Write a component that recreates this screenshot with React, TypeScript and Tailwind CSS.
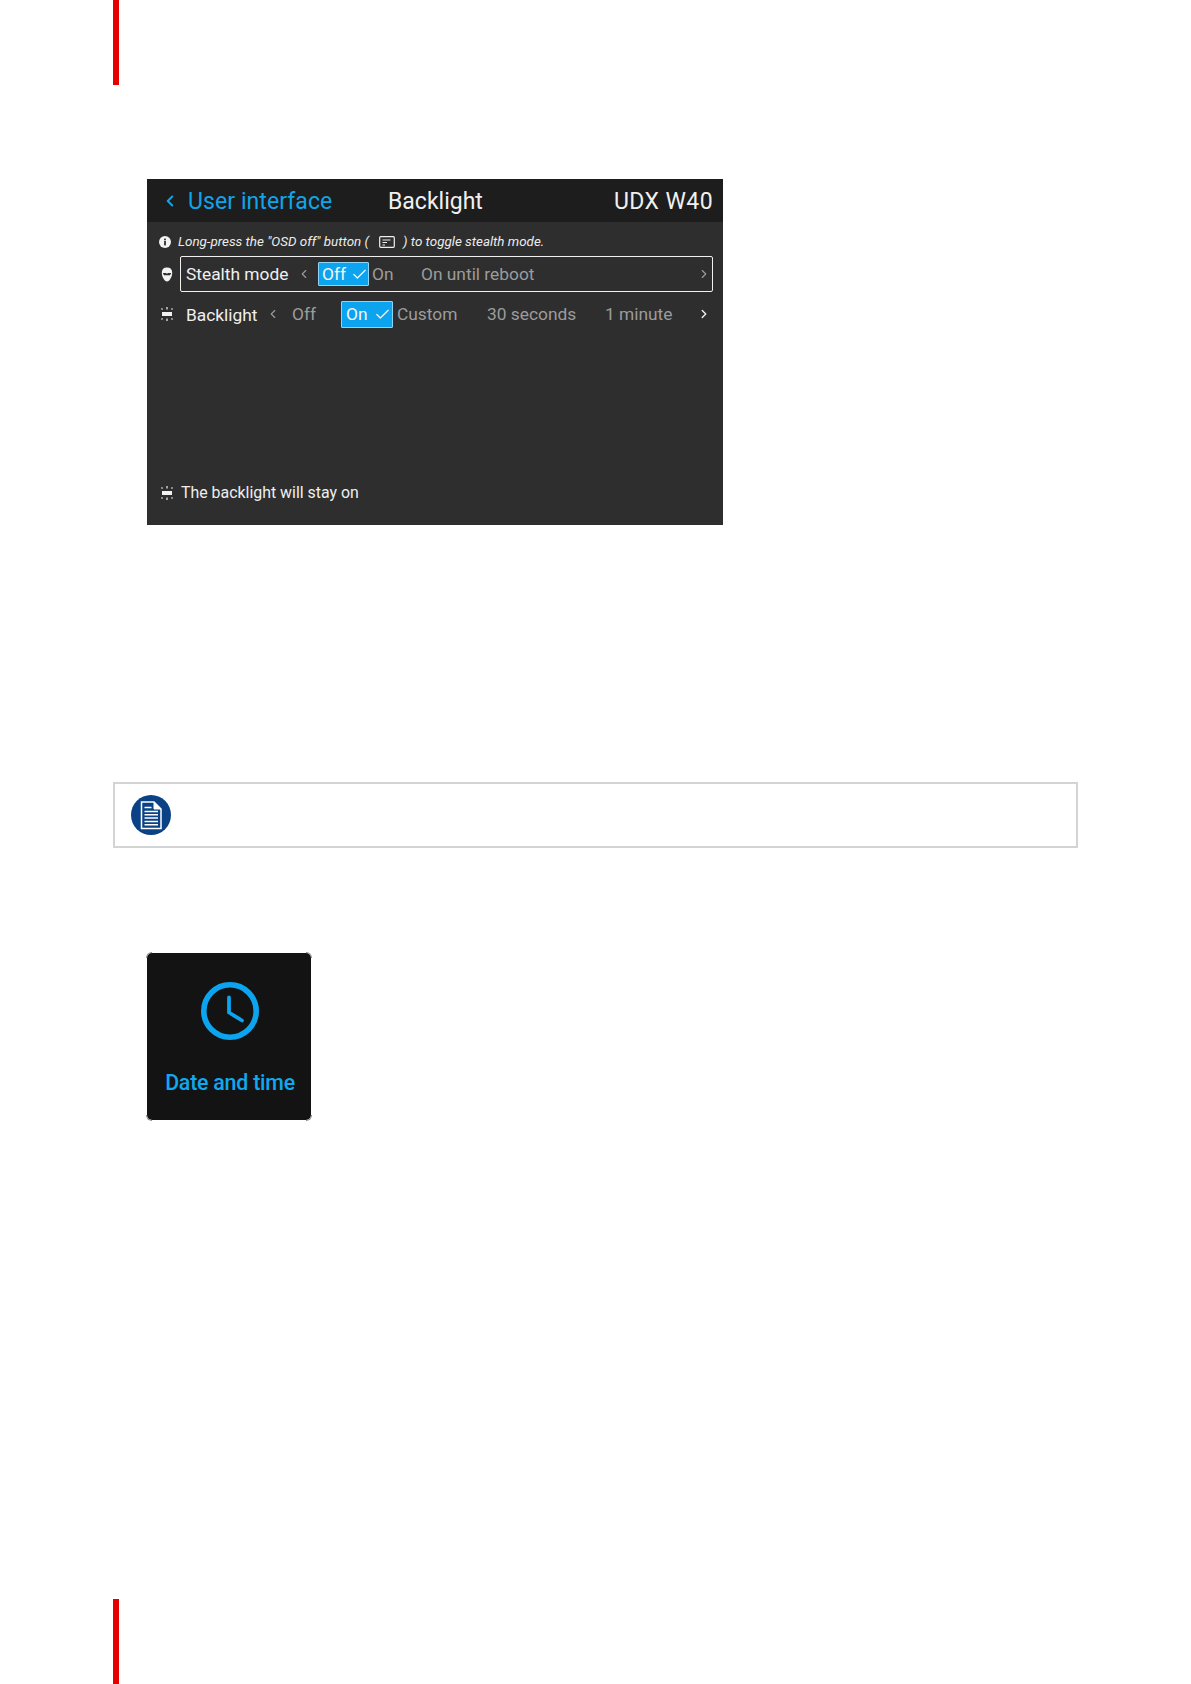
import { ChevronLeft, ChevronRight, Check } from "lucide-react";

function BacklightIcon() {
  return (
    <svg viewBox="0 0 14 16" className="w-[14px] h-[16px]" fill="none" stroke="#f2f2f2">
      <rect x="2" y="6" width="10" height="4" fill="#f2f2f2" stroke="none" />
      <path d="M7 1v2.5M7 12.5V15M1.5 2.5l1 1M12.5 2.5l-1 1M1.5 13.5l1-1M12.5 13.5l-1-1" strokeWidth="1.2" />
    </svg>
  );
}

function StealthIcon() {
  return (
    <svg viewBox="0 0 12 15" className="w-[12px] h-[15px]">
      <path d="M6 0.5C2.6 0.5 0.8 2.4 0.8 5.8c0 3.8 2.6 8.7 5.2 8.7s5.2-4.9 5.2-8.7C11.2 2.4 9.4 0.5 6 0.5z" fill="#f2f2f2" />
      <path d="M1.8 6h3.4l0.8 1 0.8-1h3.4l-1.2 2.2H3z" fill="#2d2d2d" />
    </svg>
  );
}

function Selected({ label, tall }: { label: string; tall?: boolean }) {
  return (
    <div
      className={
        tall
          ? "w-[52px] h-[27px] shrink-0 flex items-center justify-between pl-[4px] pr-[1px] bg-[#0ca4ee] border border-[#8fd3f5] text-[#f4f4f4] rounded-[1px]"
          : "w-[51px] h-[24px] shrink-0 flex items-center justify-between pl-[3px] pr-[0px] bg-[#0ca4ee] border border-[#8fd3f5] text-[#f4f4f4] rounded-[1px]"
      }
    >
      <span>{label}</span>
      <Check className="w-[17px] h-[17px]" strokeWidth={1.8} />
    </div>
  );
}

function CornerMarks() {
  return (
    <>
      <span className="absolute -top-px -left-px w-[6px] h-[6px] border-t border-l border-[#8a8a8a] rounded-tl-[6px]" />
      <span className="absolute -top-px -right-px w-[6px] h-[6px] border-t border-r border-[#8a8a8a] rounded-tr-[6px]" />
      <span className="absolute -bottom-px -left-px w-[6px] h-[6px] border-b border-l border-[#8a8a8a] rounded-bl-[6px]" />
      <span className="absolute -bottom-px -right-px w-[6px] h-[6px] border-b border-r border-[#8a8a8a] rounded-br-[6px]" />
    </>
  );
}

export default function App() {
  return (
    <div className="relative w-[1191px] h-[1684px] bg-white flex flex-col pl-[113px] font-['Roboto',sans-serif] overflow-hidden">
      <div className="w-[6px] h-[85px] shrink-0 bg-[#e60000]" />

      <div className="ml-[34px] mt-[94px] w-[576px] h-[346px] shrink-0 bg-[#2e2e2e] flex flex-col">
        <div className="h-[43px] shrink-0 bg-[#1d1d1d] flex items-center text-[23px] text-[#f0f0f0]">
          <ChevronLeft className="ml-[14px] w-[18px] h-[18px] text-[#0fa5e9]" strokeWidth={2.6} />
          <span className="ml-[9px] w-[200px] pt-[4px] tracking-[0.08px] text-[#0fa5e9]">User interface</span>
          <span className="flex-1 pt-[4px]">Backlight</span>
          <span className="mr-[10px] pt-[4px] tracking-[0.4px]">UDX W40</span>
        </div>

        <div className="mt-[13px] h-[14px] flex items-center pl-[12px] text-[13.4px] italic text-[#ececec]">
          <svg viewBox="0 0 12 12" className="w-[12px] h-[12px] mb-[1px]">
            <circle cx="6" cy="6" r="6" fill="#f2f2f2" />
            <rect x="5.1" y="5" width="1.8" height="4.4" fill="#2e2e2e" />
            <rect x="5.1" y="2.6" width="1.8" height="1.7" fill="#2e2e2e" />
          </svg>
          <span className="ml-[7px]">Long-press the "OSD off" button (</span>
          <svg viewBox="0 0 16 12" className="ml-[10px] w-[16px] h-[12px]" fill="none" stroke="#f0f0f0" strokeWidth="1.2">
            <rect x="0.7" y="0.7" width="14.6" height="10.6" rx="1" />
            <path d="M3.5 4h8M3.5 6.5h4.5M3.5 9h2.5" />
          </svg>
          <span className="ml-[8px]">) to toggle stealth mode.</span>
        </div>

        <div className="mt-[7px] flex items-center text-[17.35px] text-[#9c9c9c]">
          <div className="w-[33px] pl-[6px] flex justify-center">
            <StealthIcon />
          </div>
          <div className="w-[533px] h-[36px] border border-[#f0f0f0] rounded-[2px] flex items-center pl-[5px]">
            <span className="w-[111px] text-[#f0f0f0]">Stealth mode</span>
            <ChevronLeft className="w-[14px] h-[14px] text-[#9a9a9a]" strokeWidth={2} />
            <span className="w-[7px]" />
            <Selected label="Off" />
            <span className="ml-[3px] w-[49px]">On</span>
            <span className="flex-1">On until reboot</span>
            <ChevronRight className="mr-[1px] w-[14px] h-[14px] text-[#9a9a9a]" strokeWidth={2} />
          </div>
        </div>

        <div className="mt-[8px] flex items-center text-[17.35px] text-[#9c9c9c]">
          <div className="w-[33px] pl-[6px] flex justify-center">
            <BacklightIcon />
          </div>
          <span className="ml-[6px] w-[80px] pt-[2px] text-[#f0f0f0]">Backlight</span>
          <ChevronLeft className="w-[14px] h-[14px] text-[#9a9a9a]" strokeWidth={2} />
          <span className="ml-[12px] w-[49px]">Off</span>
          <Selected label="On" tall />
          <span className="ml-[4px] w-[90px]">Custom</span>
          <span className="w-[118px]">30 seconds</span>
          <span className="w-[92px]">1 minute</span>
          <ChevronRight className="w-[14px] h-[14px] text-[#f0f0f0]" strokeWidth={2.4} />
        </div>

        <div className="mt-auto mb-[20px] flex items-center pl-[13px] text-[15.9px] text-[#eeeeee]">
          <BacklightIcon />
          <span className="ml-[7px]">The backlight will stay on</span>
        </div>
      </div>

      <div className="mt-[257px] w-[965px] h-[66px] shrink-0 border-2 border-[#d4d4d4] flex items-center pl-[16px]">
        <svg viewBox="0 0 40 40" className="w-[40px] h-[40px]">
          <circle cx="20" cy="20" r="20" fill="#0a4285" />
          <path d="M10.5 7h12.5l7 7v19.5h-19.5z" fill="none" stroke="#fff" strokeWidth="1.5" />
          <path d="M23 7v7h7z" fill="#fff" stroke="#fff" strokeWidth="1" />
          <path d="M13.5 12.5h7M13.5 16.5h13.5M13.5 19.8h13.5M13.5 23.1h13.5M13.5 26.4h13.5M13.5 29.7h13.5" stroke="#fff" strokeWidth="1.5" />
        </svg>
      </div>

      <div className="relative ml-[34px] mt-[105px] w-[164px] h-[167px] shrink-0 bg-[#131313] rounded-[5px] pl-[2px] flex flex-col items-center">
        <CornerMarks />
        <svg viewBox="0 0 58 58" className="mt-[29px] w-[58px] h-[58px]" fill="none" stroke="#0ca4ee">
          <circle cx="29" cy="29" r="26.2" strokeWidth="5.6" />
          <path d="M28 15.5V30.5L41 38.5" strokeWidth="3.8" strokeLinecap="round" strokeLinejoin="round" />
        </svg>
        <span className="mt-[28px] text-[21.3px] leading-[30px] font-medium tracking-[-0.2px] text-[#10a8ee]">Date and time</span>
      </div>

      <div className="mt-auto w-[6px] h-[85px] shrink-0 bg-[#e60000]" />
    </div>
  );
}
